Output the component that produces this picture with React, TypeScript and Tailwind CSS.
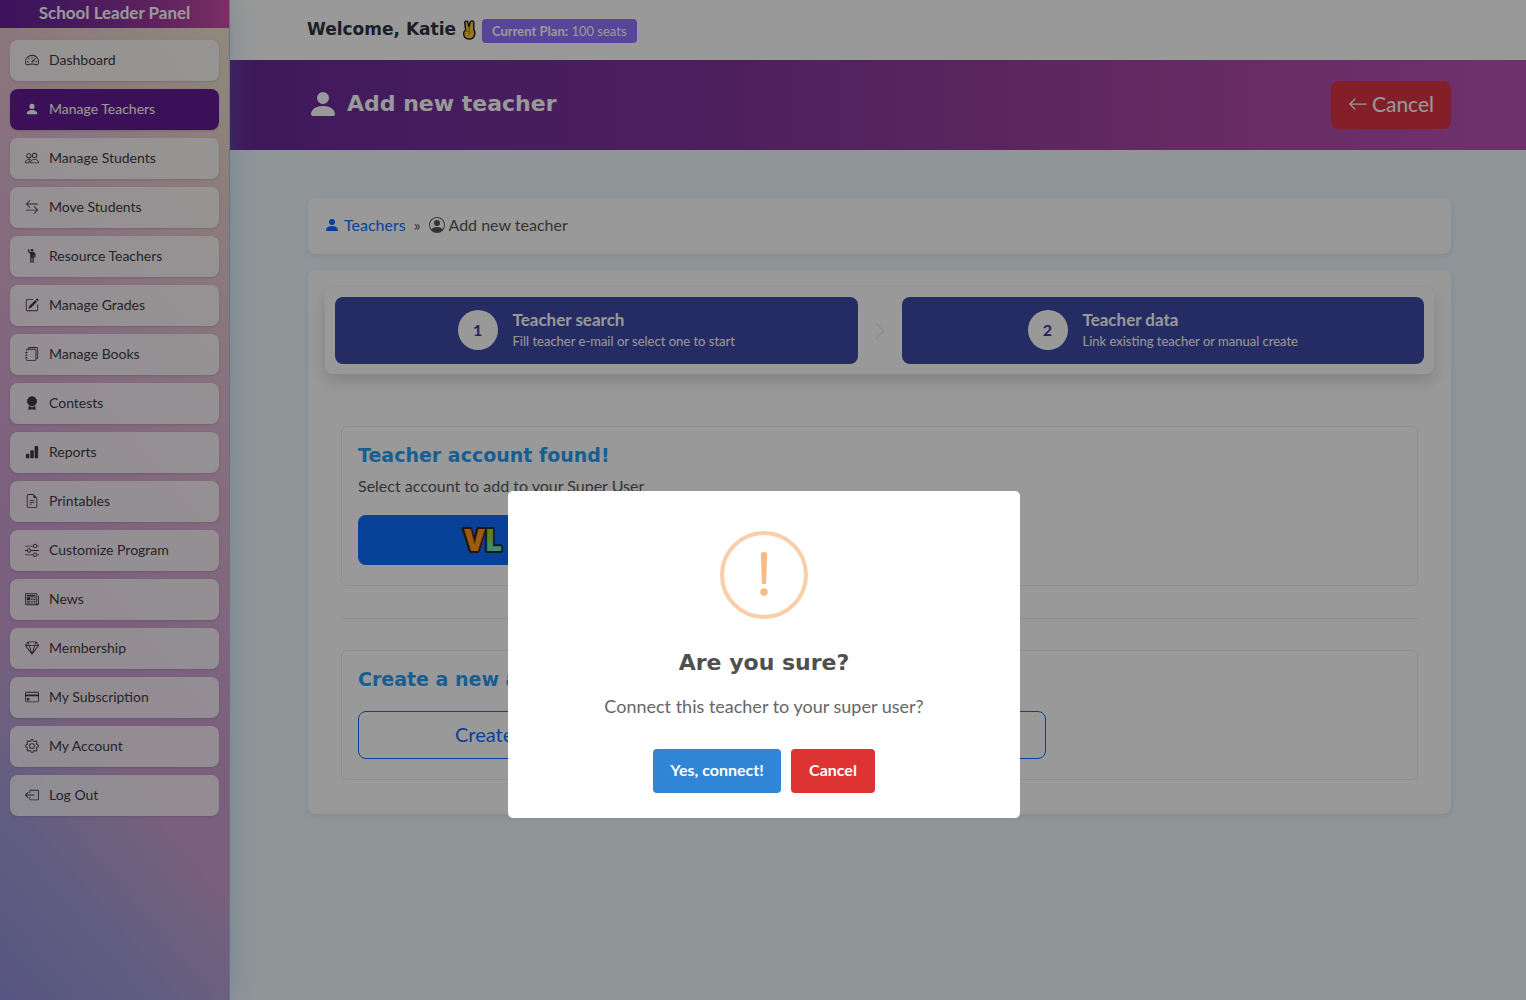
import React from "react";
import {
  BsArrowLeft,
  BsArrowLeftRight,
  BsAwardFill,
  BsBarChartFill,
  BsBoxArrowLeft,
  BsChevronRight,
  BsCreditCard,
  BsFileEarmarkText,
  BsGear,
  BsGem,
  BsJournals,
  BsNewspaper,
  BsPencilSquare,
  BsPeople,
  BsPersonCircle,
  BsPersonFill,
  BsPersonRaisedHand,
  BsSliders,
  BsSpeedometer2,
} from "react-icons/bs";
import type { IconType } from "react-icons";

const navItems: { label: string; icon: IconType; active?: boolean }[] = [
  { label: "Dashboard", icon: BsSpeedometer2 },
  { label: "Manage Teachers", icon: BsPersonFill, active: true },
  { label: "Manage Students", icon: BsPeople },
  { label: "Move Students", icon: BsArrowLeftRight },
  { label: "Resource Teachers", icon: BsPersonRaisedHand },
  { label: "Manage Grades", icon: BsPencilSquare },
  { label: "Manage Books", icon: BsJournals },
  { label: "Contests", icon: BsAwardFill },
  { label: "Reports", icon: BsBarChartFill },
  { label: "Printables", icon: BsFileEarmarkText },
  { label: "Customize Program", icon: BsSliders },
  { label: "News", icon: BsNewspaper },
  { label: "Membership", icon: BsGem },
  { label: "My Subscription", icon: BsCreditCard },
  { label: "My Account", icon: BsGear },
  { label: "Log Out", icon: BsBoxArrowLeft },
];

function Sidebar() {
  return (
    <aside className="relative z-10 flex w-[230px] shrink-0 flex-col border-r border-[#b8b8dc] bg-[linear-gradient(50deg,#918fd9_0%,#9f9bd6_14%,#b3a0d4_22%,#cba0d3_30%,#cfa2d3_42%,#dab0d2_56%,#e6c4d2_74%,#ecd8cc_89%,#efead0_100%)] shadow-[0_0_28px_rgba(90,170,215,0.35)]">
      <div className="flex h-7 items-start justify-center bg-[linear-gradient(90deg,#651f97_0%,#6e2a9b_25%,#a03a9c_70%,#cb4fa8_100%)] text-[17px] leading-[26px] font-bold text-white">
        School Leader Panel
      </div>
      <nav className="flex flex-col gap-2 px-[10px] pt-3">
        {navItems.map(({ label, icon: Icon, active }) => (
          <a
            key={label}
            href="#"
            className={
              active
                ? "flex h-[41px] items-center gap-[10px] rounded-lg bg-[#641b94] px-[15px] pb-px text-sm text-white shadow-sm"
                : "flex h-[41px] items-center gap-[10px] rounded-lg bg-white/80 px-[15px] pb-px text-sm text-[#3c3c44] shadow-sm"
            }
          >
            <Icon className="size-[14px]" />
            {label}
          </a>
        ))}
      </nav>
    </aside>
  );
}

function VictoryHand() {
  return (
    <svg viewBox="0 0 28 42" className="h-5 w-[14px]" aria-label="Victory hand" role="img">
      <path
        d="M7 21 5 5Q6.500 1 11 3L14 14 17 3Q21.500 0 24 4.500L24 20Q27 24 26 30 24 40 14 40 4 40 3 30 2 24 7 21Z"
        fill="#ffc83d"
        stroke="#1c1a17"
        strokeWidth="3"
        strokeLinejoin="round"
      />
      <path d="M8 24q6-3 9 1l-4 6M14 16l1 5" fill="none" stroke="#a86a10" strokeWidth="2" strokeLinecap="round" />
    </svg>
  );
}

function Step({ n, title, text }: { n: number; title: string; text: string }) {
  return (
    <button
      type="button"
      className="flex h-[67px] flex-1 items-center justify-center gap-[15px] rounded-lg bg-[#3e48a5] pb-px text-left text-white"
    >
      <span className="flex size-10 items-center justify-center rounded-full bg-white text-base font-bold text-[#4338a0]">
        {n}
      </span>
      <span className="flex flex-col">
        <span className="text-[17px] leading-[22px] font-bold">{title}</span>
        <span className="text-[13px] leading-5">{text}</span>
      </span>
    </button>
  );
}

function VLLogo() {
  return (
    <svg viewBox="0 0 44 40" className="h-10 w-11 overflow-visible" role="img" aria-label="VL">
      <defs>
        <linearGradient id="vlOrange" x1="0" y1="0" x2="0" y2="1">
          <stop offset="0" stopColor="#ff8a1c" />
          <stop offset="1" stopColor="#ffb020" />
        </linearGradient>
        <linearGradient id="vlGreen" gradientUnits="userSpaceOnUse" x1="0" y1="9" x2="0" y2="31">
          <stop offset="0.400" stopColor="#a4d62c" />
          <stop offset="0.700" stopColor="#6fe6bb" />
        </linearGradient>
      </defs>
      <text
        x="3"
        y="31"
        fontFamily="'Open Sans', sans-serif"
        fontWeight="800"
        fontSize="30"
        strokeWidth="4"
        strokeLinejoin="round"
        paintOrder="stroke"
      >
        <tspan fill="#ff9a1c" stroke="#4a1c10">V</tspan>
        <tspan fill="url(#vlGreen)" stroke="#12352f">L</tspan>
      </text>
    </svg>
  );
}

function Dialog() {
  return (
    <div className="fixed inset-0 z-20 flex items-start justify-center overflow-hidden bg-black/40 pt-[491px] pl-[2px]">
      <div
        role="dialog"
        aria-modal="true"
        aria-labelledby="dialog-title"
        className="flex w-[512px] flex-col items-center rounded-[5px] bg-white pt-10 pb-[25px]"
      >
        <svg viewBox="0 0 88 88" className="size-[88px]" aria-hidden="true">
          <circle cx="44" cy="44" r="42" fill="none" stroke="#facea8" strokeWidth="4" />
          <path d="M40.800 23Q40.800 21 44 21T47.200 23L46 53H42Z" fill="#f8bb86" />
          <circle cx="44" cy="61" r="3.800" fill="#f8bb86" />
        </svg>
        <h2 id="dialog-title" className="mt-7 font-['DejaVu_Sans',sans-serif] text-[22px] leading-8 font-bold text-[#4f4f4f]">
          Are you sure?
        </h2>
        <p className="mt-[15px] text-lg leading-6 text-[#666]">Connect this teacher to your super user?</p>
        <div className="mt-[31px] flex gap-[10px]">
          <button type="button" className="h-11 w-32 rounded bg-[#3085d6] pb-[3px] text-base font-bold text-white">
            Yes, connect!
          </button>
          <button type="button" className="h-11 w-[84px] rounded bg-[#dd3333] pb-[3px] text-base font-bold text-white">
            Cancel
          </button>
        </div>
      </div>
    </div>
  );
}

export default function App() {
  return (
    <div className="flex min-h-screen bg-[#f0f9fe] font-['Lato','Open_Sans',sans-serif] text-[#55575a]">
      <Sidebar />
      <main className="min-w-0 flex-1">
        <header className="flex h-[60px] items-center gap-[6px] bg-white pr-[75px] pb-px pl-[77px]">
          <h1 className="pb-[2px] font-['DejaVu_Sans',sans-serif] text-[17px] leading-6 font-bold text-[#2f3542]">Welcome, Katie</h1>
          <VictoryHand />
          <span className="mt-[3px] rounded bg-[#8f74ff] px-[10px] text-[13px] leading-6 text-white">
            <b>Current Plan:</b> 100 seats
          </span>
        </header>

        <div className="flex h-[90px] items-center justify-between bg-[linear-gradient(90deg,#692799_0%,#73309d_15%,#80339b_35%,#98409f_60%,#b04aa8_80%,#bb52b6_100%)] pr-[75px] pl-[77px]">
          <h2 className="flex items-center gap-2 pb-[3px] font-['DejaVu_Sans',sans-serif] text-[22px] leading-8 font-bold text-white">
            <BsPersonFill className="size-8" />
            Add new teacher
          </h2>
          <button
            type="button"
            className="flex h-12 items-center gap-1 rounded-lg bg-[#dc3545] px-[17px] pb-[3px] text-[21px] text-white"
          >
            <BsArrowLeft className="size-5" />
            Cancel
          </button>
        </div>

        <div className="flex flex-col gap-4 pt-12 pr-[75px] pb-12 pl-[78px]">
          <nav
            aria-label="Breadcrumb"
            className="flex h-14 items-center rounded-lg bg-white px-4 pb-[2px] text-base shadow-[0_2px_6px_rgba(80,150,190,0.15)]"
          >
            <a href="#" className="flex items-center gap-1 text-[#0d6efd]">
              <BsPersonFill className="size-4" />
              Teachers
            </a>
            <span className="px-2">»</span>
            <span className="flex items-center gap-1">
              <BsPersonCircle className="size-4" />
              Add new teacher
            </span>
          </nav>

          <section className="rounded-lg bg-white p-[17px] pb-[34px] shadow-[0_2px_6px_rgba(80,150,190,0.15)]">
            <div className="flex items-center rounded-lg bg-white p-[10px] shadow-[0_8px_16px_rgba(0,0,0,0.15)]">
              <Step n={1} title="Teacher search" text="Fill teacher e-mail or select one to start" />
              <span className="flex w-11 justify-center text-[#ececec]">
                <BsChevronRight className="size-5" />
              </span>
              <Step n={2} title="Teacher data" text="Link existing teacher or manual create" />
            </div>

            <div className="px-4 pt-[52px]">
              <div className="rounded-md border border-[#ebebeb] px-4 pt-4 pb-5">
                <h3 className="font-['DejaVu_Sans',sans-serif] text-[19px] leading-6 font-bold text-[#2a9df4]">
                  Teacher account found!
                </h3>
                <p className="mt-[7px] text-base leading-6">Select account to add to your Super User</p>
                <button
                  type="button"
                  className="mt-[17px] flex h-[50px] w-3/5 items-center rounded-lg bg-[#0d6efd] pl-[103px] text-xl text-white"
                >
                  <VLLogo />
                </button>
              </div>

              <hr className="mt-8 mb-[31px] border-[#f2f2f2]" />

              <div className="rounded-md border border-[#ebebeb] px-4 pt-4 pb-5">
                <h3 className="font-['DejaVu_Sans',sans-serif] text-[19px] leading-6 font-bold text-[#2a9df4]">
                  Create a new account
                </h3>
                <button
                  type="button"
                  className="mt-5 flex h-12 w-[66%] items-center rounded-lg border border-[#0d6efd] pb-[3px] pl-24 text-xl text-[#0d6efd]"
                >
                  Create a new teacher account
                </button>
              </div>
            </div>
          </section>
        </div>
      </main>
      <Dialog />
    </div>
  );
}
